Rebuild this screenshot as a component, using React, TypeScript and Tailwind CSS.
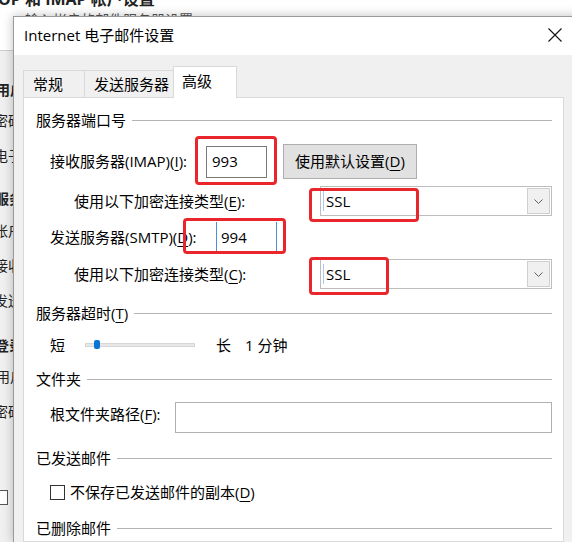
import React from "react";

const U = ({ children }: { children: React.ReactNode }) => (
  <span className="underline underline-offset-[3px]">{children}</span>
);

const GroupHeader = ({ children }: { children: React.ReactNode }) => (
  <div className="flex h-[24px] items-center gap-[6px]">
    <span className="whitespace-nowrap leading-[20px]">{children}</span>
    <div className="h-px flex-1 bg-[#b4b4b4]" />
  </div>
);

const RedBox = ({ className }: { className: string }) => (
  <div
    className={`pointer-events-none absolute z-20 rounded-[4px] border-[3px] border-[#e8262b] ${className}`}
  />
);

const Combo = ({ children }: { children?: React.ReactNode }) => (
  <div className="relative flex h-[30px] w-[232px] items-center border border-[#bdbdbd] bg-white pl-[2px]">
    <div className="h-[20px] w-px bg-[#a9c9ec]" />
    <span className="ml-[2px] leading-[20px]">SSL</span>
    <div className="ml-auto mr-px flex h-[26px] w-[23px] items-center justify-center border border-[#cfcfcf] bg-[#f0f0f0]">
      <svg width="9" height="5" viewBox="0 0 9 5">
        <path d="M0.5 0.5 L4.5 4.5 L8.5 0.5" fill="none" stroke="#606060" strokeWidth="1" />
      </svg>
    </div>
    {children}
  </div>
);

const BackStrip = () => (
  <div className="flex w-[13px] shrink-0 flex-col overflow-hidden bg-[#f0f0f0] text-[14px] leading-[20px] text-[#222]">
    <div className="h-[34px] bg-white" />
    <div className="h-px bg-[#cfcfcf]" />
    <div className="-ml-[4px] mt-[29px] h-[20px] whitespace-nowrap font-bold">用户信息</div>
    <div className="-ml-[6px] mt-[11px] h-[20px] whitespace-nowrap">密码</div>
    <div className="-ml-[6px] mt-[15px] h-[20px] whitespace-nowrap">电子</div>
    <div className="-ml-[5px] mt-[23px] h-[20px] whitespace-nowrap font-bold">服务器</div>
    <div className="-ml-[6px] mt-[12px] h-[20px] whitespace-nowrap">帐户</div>
    <div className="-ml-[6px] mt-[15px] h-[20px] whitespace-nowrap">接收</div>
    <div className="-ml-[6px] mt-[15px] h-[20px] whitespace-nowrap">发送</div>
    <div className="-ml-[5px] mt-[25px] h-[20px] whitespace-nowrap font-bold">登录</div>
    <div className="-ml-[4px] mt-[11px] h-[20px] whitespace-nowrap">用户</div>
    <div className="-ml-[6px] mt-[15px] h-[20px] whitespace-nowrap">密码</div>
    <div className="-ml-[7px] mt-[68px] h-[15px] w-[15px] border border-[#555] bg-white" />
  </div>
);

const App = () => {
  return (
    <div className="relative flex h-[542px] w-[572px] flex-col overflow-hidden bg-white font-['Open_Sans','Noto_Sans_CJK_SC',sans-serif] text-[15px] text-black">
      {/* window behind the dialog */}
      <div className="h-[16px] shrink-0 overflow-hidden bg-white">
        <div className="-ml-[12px] -mt-[11px] whitespace-nowrap text-[16px] font-bold leading-[20px] text-[#222]">
          POP 和 IMAP 帐户设置
        </div>
        <div className="ml-[25px] mt-[1px] whitespace-nowrap text-[14px] leading-[20px] text-[#555]">
          输入帐户的邮件服务器设置
        </div>
      </div>

      <div className="flex flex-1">
        <BackStrip />

        {/* dialog */}
        <div className="relative flex w-[600px] shrink-0 flex-col border-l border-t border-[#9a9a9a] shadow-[0_0_10px_rgba(0,0,0,0.25)]">
          <div className="flex h-[38px] shrink-0 items-center bg-white pb-[2px] pl-[10px]">
            <span className="leading-[20px]">Internet 电子邮件设置</span>
            <svg className="ml-[374px]" width="14" height="14" viewBox="0 0 14 14">
              <path d="M0.5 0.5 L13.5 13.5 M13.5 0.5 L0.5 13.5" stroke="#111" strokeWidth="1.1" />
            </svg>
          </div>

          <div className="flex flex-1 flex-col bg-[#f0f0f0] pl-[9px] pt-[11px]">
            {/* tabs */}
            <div className="flex h-[31px] items-end">
              <div className="flex h-[27px] w-[61px] items-center border-l border-t border-[#d9d9d9] pl-[9px]">
                常规
              </div>
              <div className="flex h-[27px] w-[89px] items-center border-l border-t border-[#d9d9d9] pl-[9px]">
                发送服务器
              </div>
              <div className="relative z-10 -mb-px flex h-[32px] w-[64px] items-center border-l border-r border-t border-[#d9d9d9] bg-white pl-[8px] pb-[3px]">
                高级
              </div>
            </div>

            {/* panel */}
            <div className="flex w-[541px] flex-1 flex-col border border-[#d9d9d9] bg-white pl-[12px] pr-[11px] pt-[10px]">
              <GroupHeader>服务器端口号</GroupHeader>

              <div className="mt-[12px] flex h-[35px] items-center pl-[14px]">
                <span className="w-[156px] whitespace-nowrap">
                  接收服务器(IMAP)(<U>I</U>):
                </span>
                <div className="relative flex h-[32px] w-[61px] items-center border border-[#7a7a7a] pl-[5px]">
                  993
                  <RedBox className="-left-[12px] -top-[11px] h-[49px] w-[82px]" />
                </div>
                <button className="ml-[16px] h-[35px] w-[134px] border border-[#adadad] bg-[#e1e1e1] text-[15px]">
                  使用默认设置(<U>D</U>)
                </button>
              </div>

              <div className="mt-[7px] flex h-[30px] items-center pl-[38px]">
                <span className="w-[246px] whitespace-nowrap">
                  使用以下加密连接类型(<U>E</U>):
                </span>
                <Combo>
                  <RedBox className="-left-[12px] top-[1px] h-[34px] w-[110px]" />
                </Combo>
              </div>

              <div className="mt-[6px] flex h-[30px] items-center pl-[14px]">
                <span className="w-[166px] whitespace-nowrap">
                  发送服务器(SMTP)(<U>D</U>):
                </span>
                <div className="relative flex h-[30px] w-[61px] items-center border-x border-[#4a8fd8] pl-[4px]">
                  994
                  <RedBox className="-left-[34px] -top-[4px] h-[36px] w-[103px]" />
                </div>
              </div>

              <div className="mt-[7px] flex h-[30px] items-center pl-[38px]">
                <span className="w-[246px] whitespace-nowrap">
                  使用以下加密连接类型(<U>C</U>):
                </span>
                <Combo>
                  <RedBox className="-left-[12px] -top-[3px] h-[38px] w-[80px]" />
                </Combo>
              </div>

              <div className="mt-[12px]">
                <GroupHeader>
                  服务器超时(<U>T</U>)
                </GroupHeader>
              </div>

              <div className="mt-[8px] flex h-[24px] items-center pl-[14px]">
                <span className="w-[35px]">短</span>
                <div className="relative h-[4px] w-[110px] border border-[#d6d6d6] bg-[#e7e7e7]">
                  <div className="absolute -top-[4px] left-[8px] h-[9px] w-[6px] rounded-[2px] bg-[#0a74d4]" />
                </div>
                <span className="ml-[21px]">长</span>
                <span className="ml-[14px]">1 分钟</span>
              </div>

              <div className="mt-[10px]">
                <GroupHeader>文件夹</GroupHeader>
              </div>

              <div className="mt-[11px] flex h-[31px] items-center pl-[14px]">
                <span className="w-[125px] whitespace-nowrap -mt-[6px]">
                  根文件夹路径(<U>F</U>):
                </span>
                <div className="h-[31px] w-[377px] border border-[#b0b0b0] bg-white" />
              </div>

              <div className="mt-[13px]">
                <GroupHeader>已发送邮件</GroupHeader>
              </div>

              <div className="mt-[10px] flex h-[24px] items-center pl-[14px]">
                <div className="h-[15px] w-[15px] border border-[#333] bg-white" />
                <span className="ml-[5px]">
                  不保存已发送邮件的副本(<U>D</U>)
                </span>
              </div>

              <div className="mt-[12px]">
                <GroupHeader>已删除邮件</GroupHeader>
              </div>
            </div>
          </div>
        </div>
      </div>
    </div>
  );
};

export default App;
